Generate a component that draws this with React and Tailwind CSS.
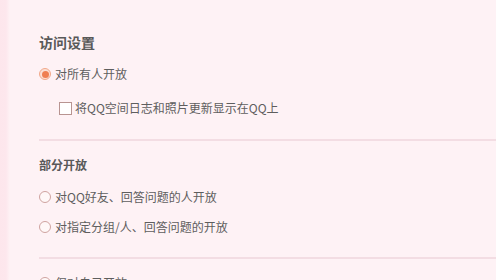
import React from "react";

const font = { fontFamily: '"Noto Sans CJK SC", "Liberation Sans", sans-serif' };

function Radio({ checked }) {
  return checked ? (
    <span className="w-[12px] h-[12px] rounded-full border border-[#f2a98a] bg-[#fbe0d6] flex items-center justify-center shrink-0">
      <span className="w-[7px] h-[7px] rounded-full bg-[#ef7f52]" />
    </span>
  ) : (
    <span className="w-[12px] h-[12px] rounded-full border-[1.5px] border-[#cfa3a0] bg-[#fff8f8] shrink-0" />
  );
}

function RadioRow({ checked, label }) {
  return (
    <div className="flex items-center h-[30px] gap-[4px] text-[12px] text-[#5e5e5e]">
      <Radio checked={checked} />
      <span>{label}</span>
    </div>
  );
}

export default function App() {
  return (
    <div
      className="w-[496px] h-[280px] overflow-hidden bg-[linear-gradient(to_right,#fde6ec_0px,#fde7ed_6px,#fef2f5_10px,#fef2f5_100%)]"
      style={font}
    >
      <div className="pl-[39px] pt-[32px]">
        <div className="h-[20px] flex items-center text-[14px] font-bold text-[#595959]">访问设置</div>
        <div className="mt-[7px]">
          <RadioRow checked label="对所有人开放" />
        </div>
        <div className="flex items-center h-[20px] mt-[9px] pl-[20px] gap-[3px] text-[12px] text-[#5e5e5e]">
          <span className="w-[13px] h-[13px] border border-[#b89491] bg-white shrink-0" />
          <span>将QQ空间日志和照片更新显示在QQ上</span>
        </div>
        <div className="mt-[21px] h-[2px] bg-[#f3dde3]" />
        <div className="mt-[15px] h-[18px] flex items-center text-[12px] font-bold text-[#595959]">部分开放</div>
        <div className="mt-[8px]">
          <RadioRow label="对QQ好友、回答问题的人开放" />
          <RadioRow label="对指定分组/人、回答问题的开放" />
        </div>
        <div className="mt-[15px] h-[2px] bg-[#f3dde3]" />
        <div className="mt-[9px]">
          <RadioRow label="仅对自己开放" />
        </div>
      </div>
    </div>
  );
}
